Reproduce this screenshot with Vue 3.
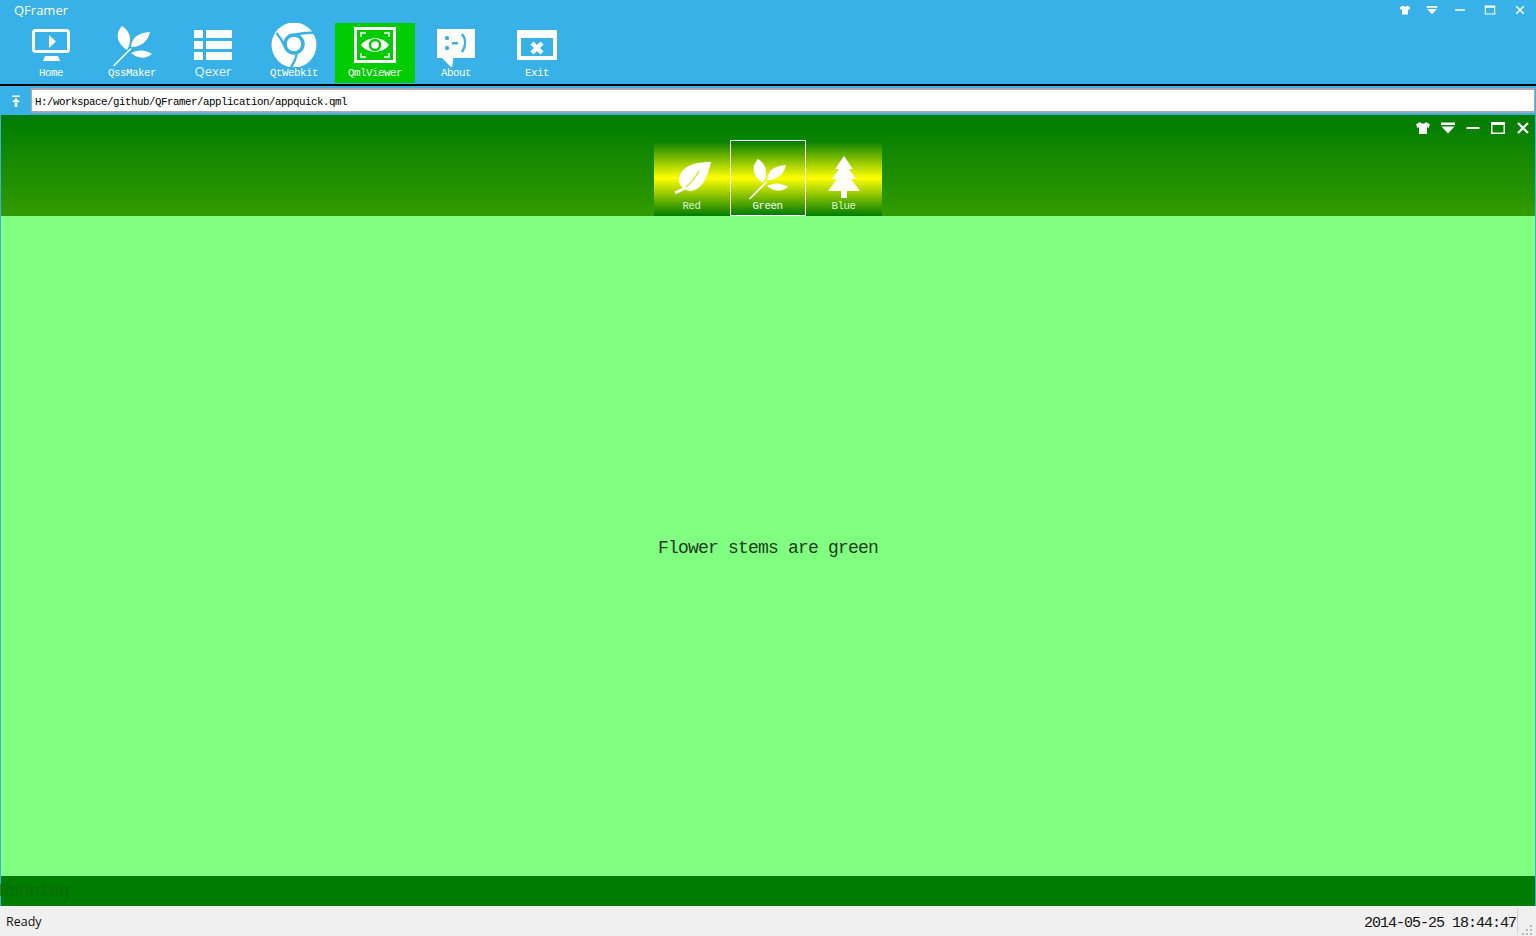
<script setup>
const toolItems = [
  { id: 'home', label: 'Home' },
  { id: 'sprig', label: 'QssMaker' },
  { id: 'list', label: 'Qexer', sans: true },
  { id: 'chrome', label: 'QtWebkit' },
  { id: 'eye', label: 'QmlViewer', active: true },
  { id: 'about', label: 'About' },
  { id: 'exit', label: 'Exit' },
]
const winButtons = ['shirt', 'drop', 'min', 'max', 'close']
const navItems = [
  { id: 'leaf', label: 'Red' },
  { id: 'sprig2', label: 'Green', active: true },
  { id: 'tree', label: 'Blue' },
]
</script>

<template>
  <div class="page">
    <svg class="defs" aria-hidden="true">
      <symbol id="home" viewBox="0 0 80 44">
        <rect x="22.5" y="7.5" width="35" height="21" rx="2" fill="none" stroke="#fff" stroke-width="3" />
        <path d="M38 12v13l7-6.500z" fill="#fff" />
        <path d="M34 33h13l2 5H32z" fill="#fff" />
      </symbol>
      <symbol id="sprig" viewBox="0 0 80 44">
        <g transform="translate(21 3)"><use href="#sprigShape" /></g>
      </symbol>
      <g id="sprigShape" fill="#fff">
        <path d="M0.500 40L18 22.500" stroke="#fff" stroke-width="1.600" />
        <path d="M9 0C3 6 2 16 14 24C20 14 17 5 9 0Z" />
        <path d="M18 21C19 12 24 7 37 6C35 14 30 21 18 21Z" />
        <path d="M18 27C26 23 33 24 39 28C33 33 25 33 18 27Z" />
      </g>
      <symbol id="list" viewBox="0 0 80 44" >
        <g fill="#fff">
          <rect x="21" y="7" width="9" height="8" /><rect x="33" y="7" width="26" height="8" />
          <rect x="21" y="18" width="9" height="8" /><rect x="33" y="18" width="26" height="8" />
          <rect x="21" y="29" width="9" height="8" /><rect x="33" y="29" width="26" height="8" />
        </g>
      </symbol>
      <symbol id="chrome" viewBox="0 0 80 44">
        <circle cx="40" cy="22" r="22.500" fill="#fff" />
        <g fill="none" stroke="#37b1e8" stroke-width="2.400">
          <circle cx="40" cy="21" r="9" stroke-width="3.500" />
          <path d="M42 11.500C48 10 56 9.500 62 10" />
          <path d="M31 24C29 19 26 14 22.500 10" />
          <path d="M43 30C42 35 40 40 37 44" />
        </g>
      </symbol>
      <symbol id="eye" viewBox="0 0 80 44">
        <rect x="20.500" y="5.500" width="39" height="33" fill="none" stroke="#fff" stroke-width="3" />
        <path d="M26 14v-4h5M49 10h5v4M54 30v4h-5M31 34h-5v-4" fill="none" stroke="#fff" stroke-width="1.600" />
        <path d="M26 22C32 13 48 13 54 22C48 31 32 31 26 22Z" fill="#fff" />
        <circle cx="40" cy="22" r="5" fill="none" stroke="#00cc00" stroke-width="2.500" />
      </symbol>
      <symbol id="about" viewBox="0 0 80 44">
        <path d="M21 6H59V35H37.500L36 45L26 35H21Z" fill="#fff" />
        <g fill="#37b1e8">
          <rect x="29" y="13" width="4" height="4" rx="1.500" /><rect x="29" y="23" width="4" height="4" rx="1.500" />
          <rect x="36" y="19" width="6" height="2.500" />
        </g>
        <path d="M46 11C50 16 50 23 46 29" fill="none" stroke="#37b1e8" stroke-width="2.500" />
      </symbol>
      <symbol id="exit" viewBox="0 0 80 44">
        <path fill-rule="evenodd" d="M20 7H60V37H20ZM24 15V33H56V15Z" fill="#fff" />
        <path d="M35 20L45 30M45 20L35 30" stroke="#fff" stroke-width="4.400" fill="none" />
      </symbol>
      <symbol id="leaf" viewBox="0 0 76 44">
        <g transform="translate(0 6)">
          <path d="M57 0C41 0 27 3 25 18C25 24 30 28 36 29C49 28 54 13 57 0Z" fill="#fff" />
          <path d="M21 31L33 25" stroke="#fff" stroke-width="3" />
          <path d="M32 25C38 20 42 14 45 9" fill="none" stroke="#c5e400" stroke-width="1.200" />
        </g>
      </symbol>
      <symbol id="sprig2" viewBox="0 0 76 44">
        <g transform="translate(19 3)"><use href="#sprigShape" /></g>
      </symbol>
      <symbol id="tree" viewBox="0 0 76 44">
        <path d="M38 0L47 13H43L50 23H45L54 35H41V42H35V35H22L31 23H26L33 13H29Z" fill="#fff" />
      </symbol>
      <symbol id="shirt" viewBox="0 0 16 16">
        <path d="M5 2L1 4.500L2.500 8L4 7V14H12V7L13.500 8L15 4.500L11 2C10 4 6 4 5 2Z" fill="#fff" />
      </symbol>
      <symbol id="drop" viewBox="0 0 16 16">
        <path d="M1 2.500H15V5H1ZM1.500 6.500H14.500L8 13.500Z" fill="#fff" />
      </symbol>
      <symbol id="min" viewBox="0 0 16 16">
        <rect x="1.500" y="7" width="13" height="2" fill="#fff" />
      </symbol>
      <symbol id="max" viewBox="0 0 16 16">
        <path d="M1 2H15V14H1ZM2.500 5V12.500H13.500V5Z" fill="#fff" fill-rule="evenodd" />
      </symbol>
      <symbol id="close" viewBox="0 0 16 16">
        <path d="M3 3L13 13M13 3L3 13" stroke="#fff" stroke-width="2.200" fill="none" />
      </symbol>
    </svg>

    <header class="top">
      <div class="title-row">
        <span class="title">QFramer</span>
        <div class="win-buttons small">
          <span v-for="b in winButtons" :key="b" class="win-btn">
            <svg width="12" height="12"><use :href="'#' + b" /></svg>
          </span>
        </div>
      </div>
      <nav class="toolbar">
        <div v-for="item in toolItems" :key="item.id" class="tool" :class="{ active: item.active }">
          <svg class="tool-icon" width="80" height="44"><use :href="'#' + item.id" /></svg>
          <span class="tool-label" :class="{ sans: item.sans }">{{ item.label }}</span>
        </div>
      </nav>
    </header>

    <div class="address">
      <svg class="up-icon" width="10" height="12" viewBox="0 0 10 12">
        <path d="M1 0.500H9V2H1ZM5 3L9 7H6.300V12H3.700V7H1Z" fill="#fff" />
      </svg>
      <div class="address-field">H:/workspace/github/QFramer/application/appquick.qml</div>
    </div>

    <main class="viewer">
      <div class="viewer-head">
        <div class="win-buttons large">
          <span v-for="b in winButtons" :key="b" class="win-btn">
            <svg width="16" height="16"><use :href="'#' + b" /></svg>
          </span>
        </div>
        <div class="nav">
          <div v-for="n in navItems" :key="n.id" class="nav-btn" :class="{ active: n.active }">
            <svg class="nav-icon" width="76" height="44"><use :href="'#' + n.id" /></svg>
            <span class="nav-label">{{ n.label }}</span>
          </div>
        </div>
      </div>
      <div class="viewer-body">
        <span class="message">Flower stems are green</span>
      </div>
      <div class="viewer-foot">Running</div>
    </main>

    <footer class="status">
      <span class="ready">Ready</span>
      <span class="clock">2014-05-25 18:44:47</span>
      <span class="sep"></span>
      <svg class="grip" width="12" height="12" viewBox="0 0 12 12">
        <g fill="#b8b8b8">
          <rect x="8" y="2" width="2" height="2" /><rect x="4" y="6" width="2" height="2" />
          <rect x="8" y="6" width="2" height="2" /><rect x="0" y="10" width="2" height="2" />
          <rect x="4" y="10" width="2" height="2" /><rect x="8" y="10" width="2" height="2" />
        </g>
      </svg>
    </footer>
  </div>
</template>

<style scoped>
.page {
  position: relative;
  width: 1536px;
  height: 936px;
  display: flex;
  flex-direction: column;
  overflow: hidden;
  font-family: "Liberation Mono", monospace;
}
.defs {
  position: absolute;
  width: 0;
  height: 0;
}
.top {
  background: #37b1e8;
  height: 84px;
  flex: none;
}
.title-row {
  height: 23px;
  display: flex;
  justify-content: space-between;
  align-items: center;
  padding: 0 0 3px 14px;
  box-sizing: border-box;
}
.title {
  font-family: "Open Sans", "Liberation Sans", sans-serif;
  font-size: 13px;
  color: #fff;
}
.win-buttons {
  display: flex;
}
.win-btn {
  display: flex;
  justify-content: center;
  align-items: center;
}
.small {
  padding-right: 1px;
}
.small .win-btn {
  width: 30px;
  height: 20px;
}
.small .win-btn:first-child {
  width: 28px;
}
.small .win-btn:nth-child(2) {
  width: 26px;
}
.toolbar {
  display: flex;
  gap: 1px;
  padding-left: 11px;
}
.tool {
  width: 80px;
  height: 60px;
  display: flex;
  flex-direction: column;
  align-items: center;
}
.tool.active {
  background: #00cc00;
}
.tool-icon {
  flex: none;
}
.tool-label {
  font-size: 10.800px;
  letter-spacing: -0.480px;
  line-height: 12px;
  color: #fff;
  white-space: nowrap;
}
.tool-label.sans {
  font-family: "Open Sans", "Liberation Sans", sans-serif;
  font-size: 13px;
  letter-spacing: 0;
  line-height: 12px;
  margin-top: -2px;
  color: #e8f6fd;
}
.address {
  flex: none;
  height: 31px;
  box-sizing: border-box;
  border-top: 2px solid #000;
  background: #37b1e8;
  display: flex;
  align-items: center;
  padding-left: 11px;
}
.up-icon {
  flex: none;
  margin-right: 10px;
}
.address-field {
  width: 1504px;
  height: 25px;
  box-sizing: border-box;
  border: 1px solid #a9a9b2;
  border-width: 2px 1px;
  background: #fff;
  color: #000;
  font-size: 10.800px;
  letter-spacing: -0.480px;
  line-height: 24px;
  padding-left: 3px;
  white-space: nowrap;
}
.viewer {
  flex: 1;
  display: flex;
  flex-direction: column;
  border-left: 1px solid #37b1e8;
  border-right: 1px solid #37b1e8;
  min-height: 0;
}
.viewer-head {
  flex: none;
  height: 101px;
  background: linear-gradient(#007c00, #329b00);
  display: flex;
  flex-direction: column;
}
.large {
  height: 25px;
  justify-content: flex-end;
}
.large .win-btn {
  width: 25px;
  height: 25px;
}
.nav {
  display: flex;
  justify-content: center;
  height: 76px;
  padding-right: 1px;
}
.nav-btn {
  width: 76px;
  height: 76px;
  box-sizing: border-box;
  background: linear-gradient(#007c00, #ffff00 50%, #007c00);
  display: flex;
  flex-direction: column;
  align-items: center;
  padding-top: 16px;
}
.nav-btn.active {
  border: 1px solid #fff;
  padding-top: 15px;
}
.nav-icon {
  flex: none;
}
.nav-label {
  font-size: 10.800px;
  letter-spacing: -0.480px;
  line-height: 12px;
  color: #d4f8c8;
  white-space: nowrap;
}
.nav-btn.active .nav-label {
  color: #f0ffe8;
}
.viewer-body {
  flex: 1;
  background: #80ff80;
  display: flex;
  justify-content: center;
  align-items: center;
  padding-top: 4px;
  min-height: 0;
}
.message {
  font-size: 18px;
  letter-spacing: -0.800px;
  color: #1c3c1c;
  white-space: nowrap;
}
.viewer-foot {
  flex: none;
  height: 30px;
  background: #007c00;
  color: #0a6c0a;
  font-size: 18px;
  letter-spacing: -0.800px;
  line-height: 30px;
  text-indent: -2px;
}
.status {
  flex: none;
  position: relative;
  height: 30px;
  background: #f0f0f0;
  display: flex;
  align-items: center;
  padding-left: 6px;
  color: #111;
}
.ready {
  font-family: "Open Sans", "Liberation Sans", sans-serif;
  font-size: 12.500px;
}
.clock {
  margin-left: auto;
  padding-top: 4px;
  font-size: 15px;
  letter-spacing: -1px;
  margin-right: 1px;
}
.sep {
  width: 1px;
  height: 26px;
  background: #d2d2d2;
  margin-right: 18px;
}
.grip {
  position: absolute;
  right: 2px;
  bottom: 1px;
}
</style>
